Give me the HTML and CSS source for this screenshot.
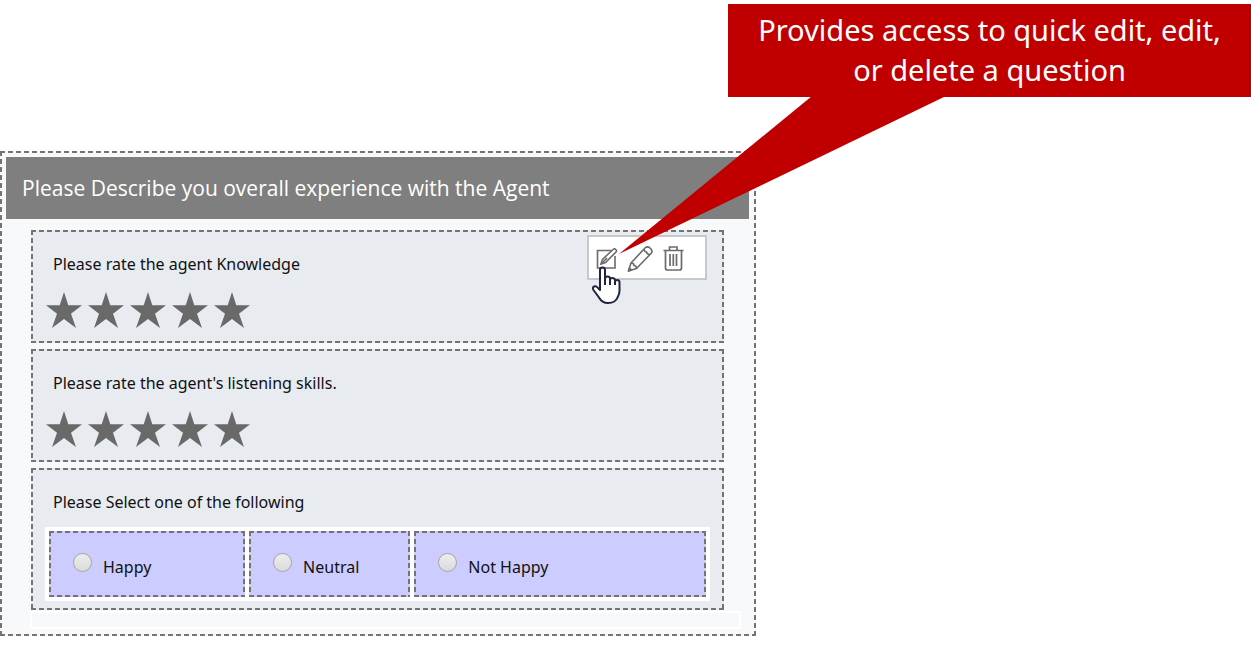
FILE: index.html
```html
<!DOCTYPE html>
<html lang="en">
<head>
<meta charset="utf-8">
<title>Survey designer</title>
<link rel="stylesheet" href="styles.css">
</head>
<body>
<svg class="defs" aria-hidden="true">
  <symbol id="star" viewBox="0 0 36 36"><path d="M18 0l4.300 13.200H36L25 21.700 30 36 18 27 6 36l5-14.300L0 13.200h13.700z" fill="#696969"/></symbol>
</svg>
<main class="survey dashed">
  <h1 class="survey-title">Please Describe you overall experience with the Agent</h1>
  <div class="questions">
    <section class="question dashed">
      <h2 class="question-label">Please rate the agent Knowledge</h2>
      <div class="stars">
        <button class="star" aria-label="1 star"><svg><use href="#star"/></svg></button>
        <button class="star" aria-label="2 stars"><svg><use href="#star"/></svg></button>
        <button class="star" aria-label="3 stars"><svg><use href="#star"/></svg></button>
        <button class="star" aria-label="4 stars"><svg><use href="#star"/></svg></button>
        <button class="star" aria-label="5 stars"><svg><use href="#star"/></svg></button>
      </div>
      <div class="toolbar">
        <button class="tool" aria-label="Quick edit">
          <svg viewBox="0 0 28 28" fill="none" stroke="#6b6b6b" stroke-width="1.600"><path d="M18 5.500H4.500v17.500H22V11"/><path d="M8 19l1.500-4.500L20 4.500q1.500-1.200 2.800 0t0 2.700L12.500 17.500z" fill="#fff"/><path d="M8 19l6-6"/></svg>
        </button>
        <button class="tool" aria-label="Edit">
          <svg viewBox="0 0 28 28" fill="none" stroke="#6b6b6b" stroke-width="1.600" stroke-linejoin="round"><path d="M1.500 26l2.500-8L18 3q2-2 4.500-.5L24 4q2 2.500 0 4.500L9.500 23.500z"/><path d="M4 18q3 0 3 2.500 2.500 0 2.500 3M17 4q0 2.500 2.500 3 .5 2.500 3.500 2.500M1.500 26l3-1-2-2z"/></svg>
        </button>
        <button class="tool" aria-label="Delete">
          <svg viewBox="0 0 28 28" fill="none" stroke="#6b6b6b" stroke-width="1.700"><path d="M2.500 5.500h20M8.500 5V2H16v3M4.500 6v17q0 2 2 2h12q2 0 2-2V6"/><path d="M9 9v12M12.300 9v12M15.500 9v12"/></svg>
        </button>
        <svg class="cursor" viewBox="0 0 30 38" aria-hidden="true"><path d="M9 20V4q0-2.500 2.500-2.500T14 4v8.500q0-2 2.500-2t2.500 2v1q.5-1.500 2.500-1.500t2.500 2v1q.5-1 2.300-1t2.200 2v9q0 3-2 6.500-2 5.500-9.500 5.500-6 0-9-5.500L2.500 24q-1.500-2.500.5-3.500t4 1.500L9 24z" fill="#fff" stroke="#20243c" stroke-width="2" stroke-linejoin="round"/><path d="M14 12v7M19 13v6M24 15v4" stroke="#20243c" stroke-width="2"/></svg>
      </div>
    </section>
    <section class="question dashed">
      <h2 class="question-label">Please rate the agent's listening skills.</h2>
      <div class="stars">
        <button class="star" aria-label="1 star"><svg><use href="#star"/></svg></button>
        <button class="star" aria-label="2 stars"><svg><use href="#star"/></svg></button>
        <button class="star" aria-label="3 stars"><svg><use href="#star"/></svg></button>
        <button class="star" aria-label="4 stars"><svg><use href="#star"/></svg></button>
        <button class="star" aria-label="5 stars"><svg><use href="#star"/></svg></button>
      </div>
    </section>
    <section class="question dashed">
      <h2 class="question-label">Please Select one of the following</h2>
      <div class="options">
        <label class="option dashed"><input class="radio" type="radio" name="mood"><span>Happy</span></label>
        <label class="option dashed"><input class="radio" type="radio" name="mood"><span>Neutral</span></label>
        <label class="option dashed"><input class="radio" type="radio" name="mood"><span>Not Happy</span></label>
      </div>
    </section>
  </div>
  <div class="drop-zone"></div>
  <aside class="callout">
    <p class="callout-text">Provides access to quick edit, edit,<br>or delete a question</p>
    <svg class="callout-tail" viewBox="0 0 327 158" aria-hidden="true"><path d="M193 0H327L0 158z" fill="#c00000"/></svg>
  </aside>
</main>
</body>
</html>
```
FILE: styles.css
```css
* { box-sizing: border-box; }

body {
  margin: 0;
  padding-top: 151px;
  background: #fff;
  color: #111;
  font-family: "Noto Sans", "Open Sans", sans-serif;
}

h1, h2, p { margin: 0; font-weight: 400; }

button { padding: 0; border: 0; background: none; cursor: pointer; }
button svg { display: block; width: 100%; height: 100%; }

.defs { position: absolute; width: 0; height: 0; }

.dashed {
  --h: repeating-linear-gradient(90deg, #747474 0 5px, transparent 5px 8px);
  --v: repeating-linear-gradient(180deg, #747474 0 5px, transparent 5px 8px);
  background-image: var(--h), var(--h), var(--v), var(--v);
  background-position: top, bottom, left, right;
  background-size: 100% 2px, 100% 2px, 2px 100%, 2px 100%;
  background-repeat: no-repeat;
}

.survey {
  position: relative;
  max-width: 756px;
  padding: 6px 7px 7px 6px;
  background-color: #f7f9fb;
}

.survey-title {
  padding: 16px;
  background: #7f7f7f;
  color: #fff;
  font-family: "Open Sans", "Noto Sans", sans-serif;
  font-size: 21px;
  line-height: 30px;
}

.questions {
  display: flex;
  flex-direction: column;
  gap: 6px;
  padding: 11px 25px 1px;
}

.question {
  position: relative;
  padding: 24px 15px 14px;
  background-color: #e8ebf0;
}

.question-label {
  padding-left: 7px;
  font-size: 16px;
  line-height: 21px;
}

.stars { display: flex; gap: 6px; padding: 17px 0 1px; }
.star { width: 36px; height: 36px; }

.toolbar {
  position: absolute;
  top: 5px;
  right: 17px;
  display: flex;
  gap: 6px;
  width: 120px;
  height: 45px;
  padding: 8px 4px;
  background: #fff;
  border: 2px solid #c6c8ca;
}
.tool { width: 28px; height: 28px; }
.cursor { position: absolute; top: 29px; left: 2px; width: 30px; height: 38px; }

.options {
  display: grid;
  grid-template-columns: 197fr 162fr 293fr;
  gap: 4px;
  margin: 14px -1px -5px;
  padding: 4px;
  background: #fff;
}
.option {
  display: flex;
  gap: 11px;
  height: 66px;
  padding: 22px 24px;
  background-color: #ccf;
  font-size: 16px;
  line-height: 28px;
}
.radio {
  appearance: none;
  width: 19px;
  height: 19px;
  margin: 0;
  border: 1px solid #a6a6a6;
  border-radius: 50%;
  background: linear-gradient(#eee, #dadada);
}

.drop-zone { height: 18px; margin: 0 8px 0 24px; border: 2px solid #fff; }

.callout {
  position: absolute;
  top: -147px;
  left: 728px;
  width: 523px;
  padding: 6px 16px 7px;
  background: #c00000;
  color: #fff;
  font-size: 29px;
  line-height: 40px;
  text-align: center;
}
.callout-tail { position: absolute; top: 92px; left: -109px; width: 327px; height: 158px; }
```
